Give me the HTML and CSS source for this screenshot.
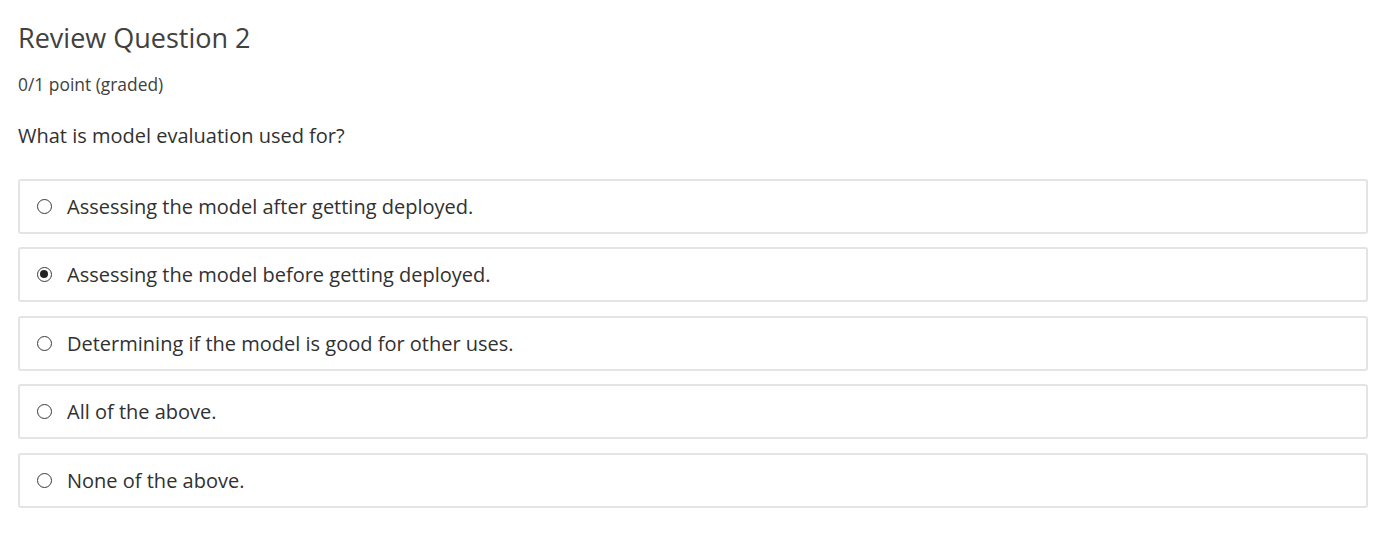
FILE: index.html
```html
<!DOCTYPE html>
<html>
<head>
<meta charset="utf-8">
<link rel="stylesheet" href="styles.css">
</head>
<body>
<div class="problem">
  <h2 class="title">Review Question 2</h2>
  <div class="points">0/1 point (graded)</div>
  <p class="prompt">What is model evaluation used for?</p>
  <div class="choices">
    <label class="choice"><input type="radio" name="q2" class="radio"><span>Assessing the model after getting deployed.</span></label>
    <label class="choice"><input type="radio" name="q2" class="radio" checked><span>Assessing the model before getting deployed.</span></label>
    <label class="choice"><input type="radio" name="q2" class="radio"><span>Determining if the model is good for other uses.</span></label>
    <label class="choice"><input type="radio" name="q2" class="radio"><span>All of the above.</span></label>
    <label class="choice"><input type="radio" name="q2" class="radio"><span>None of the above.</span></label>
  </div>
</div>
</body>
</html>
```
FILE: styles.css
```css
html, body {
  margin: 0;
  padding: 0;
  background: #fff;
}
body {
  font-family: "Open Sans", sans-serif;
  color: #313131;
}
.problem {
  padding: 20px 22px 0 18px;
}
.title {
  margin: 0;
  font-size: 27px;
  font-weight: 400;
  line-height: 36px;
  color: #414141;
}
.points {
  margin-top: 16px;
  font-size: 17.4px;
  line-height: 24px;
  color: #414141;
}
.prompt {
  margin: 26px 0 28.5px;
  font-size: 20px;
  line-height: 28px;
  color: #313131;
}
.choices {
  display: flex;
  flex-direction: column;
  gap: 13.5px;
}
.choice {
  display: flex;
  align-items: center;
  height: 51px;
  border: 2px solid #e4e4e4;
  border-radius: 3px;
  padding-left: 17px;
  font-size: 20px;
  color: #313131;
}
.radio {
  appearance: none;
  -webkit-appearance: none;
  box-sizing: border-box;
  width: 15px;
  height: 15px;
  margin: 0 15px 0 0;
  border: 1.5px solid #3a3a3a;
  border-radius: 50%;
  background: #fff;
  position: relative;
  flex: none;
}
.radio:checked::after {
  content: "";
  position: absolute;
  left: 2px;
  top: 2px;
  width: 8px;
  height: 8px;
  border-radius: 50%;
  background: #222;
}
```
